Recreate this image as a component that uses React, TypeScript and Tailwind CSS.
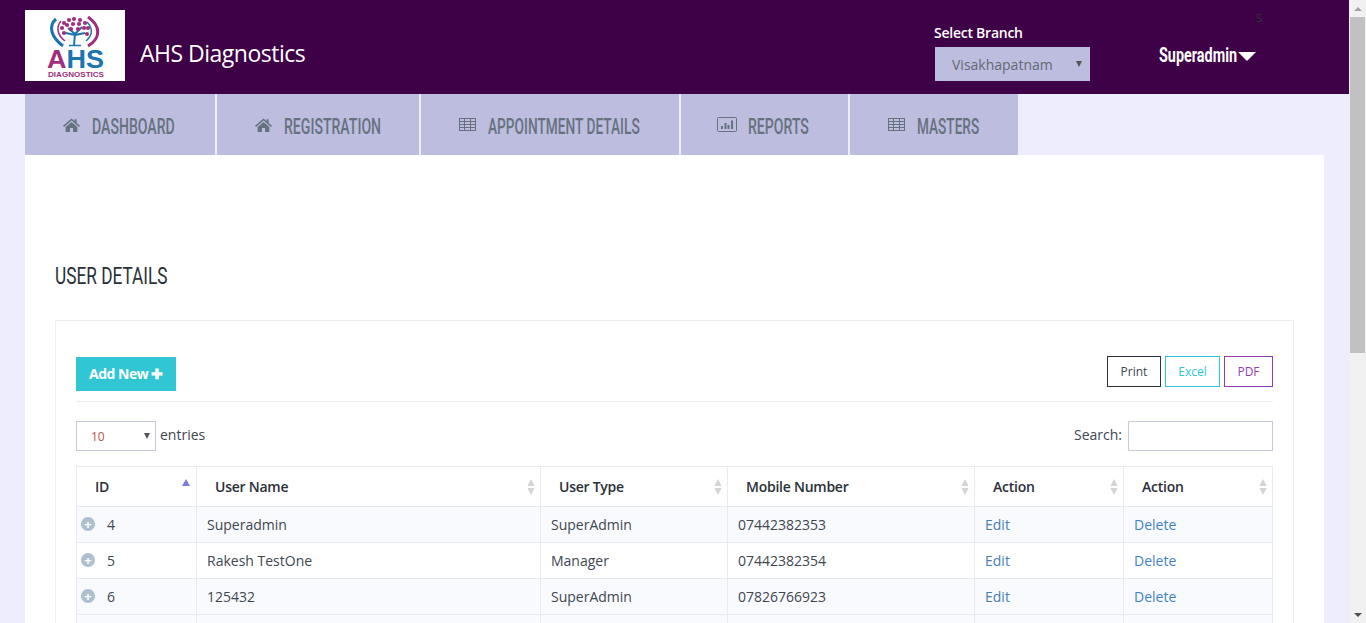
import React from "react";

const HomeIcon = () => (
  <svg width="17" height="14" viewBox="0 0 17 14" className="text-[#67727f] shrink-0" fill="currentColor">
    <path d="M8.5 0.5 L11.5 3.1 V1.2 H13.6 V4.9 L17 7.8 L16 8.9 L8.5 2.5 L1 8.9 L0 7.8 Z" />
    <path d="M8.5 3.9 L14.4 8.9 V14 H10 V10 H7 V14 H2.6 V8.9 Z" />
  </svg>
);

const TableIcon = () => (
  <svg width="17" height="13" viewBox="0 0 17 13" className="text-[#67727f] shrink-0" fill="none" stroke="currentColor" strokeWidth="1">
    <rect x="0.5" y="0.5" width="16" height="12" />
    <path d="M0.5 3.5 H16.5 M0.5 6.5 H16.5 M0.5 9.5 H16.5 M5.5 0.5 V12.5 M11.5 0.5 V12.5" />
  </svg>
);

const ChartIcon = () => (
  <svg width="20" height="15" viewBox="0 0 20 15" className="text-[#67727f] shrink-0" fill="none" stroke="currentColor">
    <rect x="0.5" y="0.5" width="19" height="14" rx="1" />
    <path d="M5 12V9M8.5 12V6M11.5 12V8M15 12V3.5" strokeWidth="2" />
  </svg>
);

const Logo = () => (
  <svg width="100" height="71" viewBox="0 0 100 71" className="block">
    <rect width="100" height="71" fill="#fff" />
    <path d="M31 9 C23 16 26 27 38 36" fill="none" stroke="#1b75ae" strokeWidth="3" />
    <path d="M36 11 C31 17 32 25 40 31" fill="none" stroke="#a22d7c" strokeWidth="1.5" />
    <path d="M63 7 C76 16 76 28 63 36" fill="none" stroke="#a22d7c" strokeWidth="3" />
    <path d="M62 12 C68 18 68 25 61 31" fill="none" stroke="#1b75ae" strokeWidth="1.5" />
    <path d="M49 35 L50 24 L43 18 M50 24 L57 17 M50 25 L41 23 M50 25 L60 23" fill="none" stroke="#1b75ae" strokeWidth="2" />
    <path d="M44 35.5 H56" stroke="#1b75ae" strokeWidth="1.5" />
    {[[39,13],[44,10],[49,9],[55,10],[60,13],[37,18],[42,15],[48,14],[54,14],[59,18],[63,18],[39,23],[62,24],[46,19],[53,19]].map(([x, y], i) => (
      <circle key={i} cx={x} cy={y} r="2.1" fill="#a22d7c" />
    ))}
    <text x="22" y="58" textLength="57" lengthAdjust="spacingAndGlyphs" fontFamily="'Liberation Sans', sans-serif" fontWeight="700" fontSize="26">
      <tspan fill="#a22d7c">A</tspan>
      <tspan fill="#1b75ae">HS</tspan>
    </text>
    <text x="23" y="66.5" textLength="56" lengthAdjust="spacingAndGlyphs" fontFamily="'Liberation Sans', sans-serif" fontWeight="700" fontSize="8" fill="#a22d7c">DIAGNOSTICS</text>
  </svg>
);

const tabs = [
  { label: "DASHBOARD", icon: <HomeIcon />, w: "w-[190px] pr-[2px] gap-[12px]", tw: "w-[83px]", s: "scale-x-[0.64]" },
  { label: "REGISTRATION", icon: <HomeIcon />, w: "w-[202px] pr-[2px] gap-[12px]", tw: "w-[96px]", s: "scale-x-[0.64]" },
  { label: "APPOINTMENT DETAILS", icon: <TableIcon />, w: "w-[258px] pr-[2px] gap-[12px]", tw: "w-[151px]", s: "scale-x-[0.623]" },
  { label: "REPORTS", icon: <ChartIcon />, w: "w-[167px] pr-[4px] gap-[11px]", tw: "w-[60px]", s: "scale-x-[0.64]" },
  { label: "MASTERS", icon: <TableIcon />, w: "w-[168px] pr-[2px] gap-[12px]", tw: "w-[62px]", s: "scale-x-[0.62]" },
];

const SortIcon = () => (
  <svg width="8" height="16" viewBox="0 0 10 16" fill="#d4d4d4" preserveAspectRatio="none" className="shrink-0">
    <path d="M5 0 L9.5 7 H0.5 Z M5 16 L0.5 9 H9.5 Z" />
  </svg>
);

const SortUp = () => (
  <svg width="8" height="7" viewBox="0 0 8 7" fill="#7d7bd8" className="shrink-0 mb-[8px]">
    <path d="M4 0 L8 7 H0 Z" />
  </svg>
);

const headers = ["User Name", "User Type", "Mobile Number", "Action", "Action"];

const rows = [
  ["4", "Superadmin", "SuperAdmin", "07442382353"],
  ["5", "Rakesh TestOne", "Manager", "07442382354"],
  ["6", "125432", "SuperAdmin", "07826766923"],
];

const cell = "border border-[#e8ecf2] px-[10px] h-[36px] align-middle";
const thCell = "border border-[#e8ecf2] h-[40px] pl-[18px] text-left font-semibold tracking-[-0.25px] text-[#2a3038]";

export default function App() {
  return (
    <div className="flex h-[623px] w-[1366px] overflow-hidden bg-[#eeedfd] text-[14px] text-[#3e4650] font-['Open_Sans',sans-serif]">
      <div className="w-[1349px] shrink-0">
        <header className="flex h-[94px] items-start bg-[#3e0047] pl-[25px]">
          <div className="mt-[10px]"><Logo /></div>
          <div className="ml-[15px] mt-[38px] w-[165px] whitespace-nowrap text-[23px] leading-[30px] tracking-[-0.5px] font-medium text-white">AHS Diagnostics</div>
          <div className="ml-[630px] mt-[23px] w-[155px]">
            <div className="-ml-[1px] text-[14px] leading-[19px] font-semibold tracking-[-0.25px] text-white">Select Branch</div>
            <div className="mt-[5px] flex h-[34px] w-[155px] items-center justify-between bg-[#bdbde0] pl-[17px] pr-[8px] text-[14px] text-[#646a75]">
              <span>Visakhapatnam</span>
              <span className="h-0 w-0 border-x-[3.5px] border-t-[6px] border-x-transparent border-t-[#555]"></span>
            </div>
          </div>
          <div className="ml-[69px] mt-[11px] w-[110px]">
            <div className="pl-[97px] text-[11px] leading-[14px] text-[#2d3a33]">S</div>
            <div className="mt-[17px] flex items-center text-[20px] leading-[26px] font-bold text-white font-['Roboto',sans-serif]">
              <span className="w-[79px]"><span className="inline-block origin-left scale-x-[0.72] whitespace-nowrap">Superadmin</span></span>
              <span className="mt-[3px] h-0 w-0 border-x-[9px] border-t-[9px] border-x-transparent border-t-white"></span>
            </div>
          </div>
        </header>

        <nav className="flex h-[61px] gap-[2px] pl-[25px]">
          {tabs.map((t) => (
            <div key={t.label} className={`flex items-center justify-center bg-[#bdbde0] ${t.w}`}>
              {t.icon}
              <span className={`block pt-[4px] text-[22px] leading-[30px] font-medium text-[#67727f] font-['Roboto',sans-serif] ${t.tw}`}>
                <span className={`inline-block origin-left whitespace-nowrap ${t.s}`}>{t.label}</span>
              </span>
            </div>
          ))}
        </nav>

        <main className="ml-[25px] w-[1299px] h-[468px] overflow-hidden bg-white px-[30px] pt-[106px]">
          <h2 className="text-[23px] leading-[32px] text-[#2a3038] font-['Roboto',sans-serif]">
            <span className="inline-block origin-left scale-x-[0.75] whitespace-nowrap">USER DETAILS</span>
          </h2>
          <section className="mt-[27px] border border-[#eceef2] px-[20px] pt-[35px]">
            <div className="flex items-start justify-between border-b border-[#eceef2] h-[46px]">
              <button className="mt-[1px] h-[34px] w-[100px] bg-[#31c6d4] pb-[2px] text-[14px] font-bold tracking-[-0.5px] text-white">Add New ✚</button>
              <div className="flex gap-[4px] text-[12px]">
                <span className="flex h-[31px] w-[54px] items-center justify-center border border-[#2c3038] text-[#3e4650]">Print</span>
                <span className="flex h-[31px] w-[55px] items-center justify-center border border-[#31c6d4] text-[#31c6d4]">Excel</span>
                <span className="flex h-[31px] w-[49px] items-center justify-center border border-[#8e3fb5] text-[#8e3fb5]">PDF</span>
              </div>
            </div>
            <div className="mt-[19px] flex items-center justify-between">
              <div className="flex items-center gap-[4px]">
                <div className="flex h-[30px] w-[80px] items-center justify-between border border-[#c3cbdc] pl-[14px] pr-[5px] text-[12px] text-[#b0574c]">
                  <span className="mt-[1px]">10</span>
                  <span className="h-0 w-0 border-x-[3.5px] border-t-[6px] border-x-transparent border-t-[#555]"></span>
                </div>
                <span className="-mt-[4px]">entries</span>
              </div>
              <div className="flex items-center gap-[6px]">
                <span className="-mt-[4px]">Search:</span>
                <div className="h-[30px] w-[145px] border border-[#c3cbdc]"></div>
              </div>
            </div>
            <table className="mt-[15px] w-[1196px] table-fixed border-collapse">
              <colgroup>
                <col className="w-[120px]" />
                <col className="w-[344px]" />
                <col className="w-[187px]" />
                <col className="w-[247px]" />
                <col className="w-[149px]" />
                <col className="w-[149px]" />
              </colgroup>
              <thead>
                <tr>
                  <th className={`${thCell} pr-[6px]`}>
                    <div className="flex items-center justify-between">ID<SortUp /></div>
                  </th>
                  {headers.map((h, i) => (
                    <th key={i} className={`${thCell} pr-[5px]`}>
                      <div className="flex items-center justify-between">{h}<SortIcon /></div>
                    </th>
                  ))}
                </tr>
              </thead>
              <tbody>
                {rows.map((r, i) => (
                  <tr key={r[0]} className={i % 2 === 0 ? "bg-[#f9fafd]" : "bg-white"}>
                    <td className="border border-[#e8ecf2] h-[36px] pl-[4px]">
                      <div className="flex items-center gap-[12px]">
                        <span className="-mt-[1px] flex h-[14px] w-[14px] items-center justify-center rounded-full bg-[#b0bfd0] text-[13px] leading-none font-bold text-white">+</span>
                        <span>{r[0]}</span>
                      </div>
                    </td>
                    <td className={cell}>{r[1]}</td>
                    <td className={cell}>{r[2]}</td>
                    <td className={cell}>{r[3]}</td>
                    <td className={`${cell} text-[#4a7fb5]`}>Edit</td>
                    <td className={`${cell} text-[#3f83cc]`}>Delete</td>
                  </tr>
                ))}
                <tr className="bg-[#f9fafd]">
                  <td className={cell}></td><td className={cell}></td><td className={cell}></td><td className={cell}></td><td className={cell}></td><td className={cell}></td>
                </tr>
              </tbody>
            </table>
          </section>
        </main>
      </div>

      <div className="flex w-[17px] shrink-0 flex-col items-center bg-[#f1f1f1]">
        <div className="flex h-[17px] items-center justify-center">
          <span className="h-0 w-0 border-x-[4px] border-b-[4px] border-x-transparent border-b-[#a3a3a3]"></span>
        </div>
        <div className="h-[336px] w-[15px] bg-[#c1c1c1]"></div>
        <div className="flex-1"></div>
        <div className="flex h-[17px] items-center justify-center">
          <span className="h-0 w-0 border-x-[4px] border-t-[4px] border-x-transparent border-t-[#505050]"></span>
        </div>
      </div>
    </div>
  );
}
